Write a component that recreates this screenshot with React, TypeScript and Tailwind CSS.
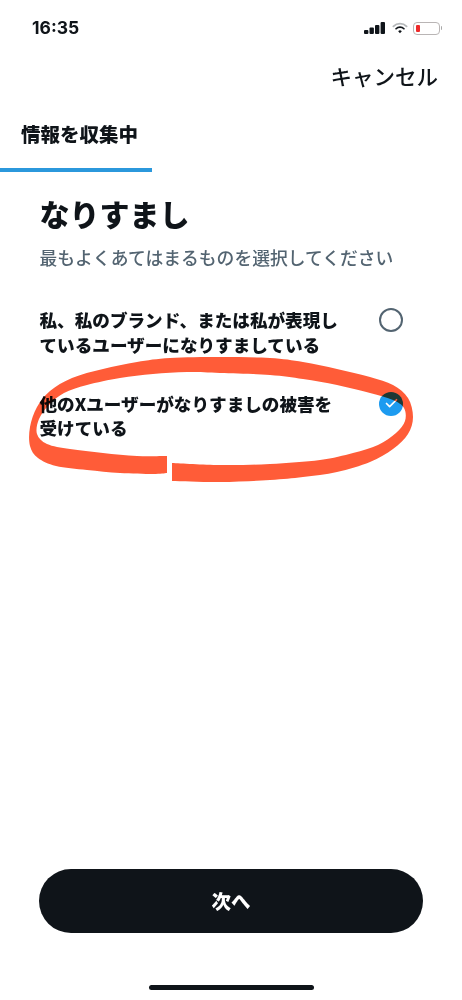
import { Check } from "lucide-react";

const CJK = "font-['Noto_Sans_CJK_JP','Noto_Sans',sans-serif]";

type Point = [number, number];

// open catmull-rom curve running through every given point
function smooth(points: Point[]) {
  let d = "";
  for (let i = 0; i < points.length - 1; i++) {
    const p0 = points[Math.max(i - 1, 0)];
    const p1 = points[i];
    const p2 = points[i + 1];
    const p3 = points[Math.min(i + 2, points.length - 1)];
    const c1 = [p1[0] + (p2[0] - p0[0]) / 6, p1[1] + (p2[1] - p0[1]) / 6];
    const c2 = [p2[0] - (p3[0] - p1[0]) / 6, p2[1] - (p3[1] - p1[1]) / 6];
    d += ` C${c1[0]} ${c1[1]} ${c2[0]} ${c2[1]} ${p2[0]} ${p2[1]}`;
  }
  return d;
}

// page coordinates, traced from the gap at the bottom round the right side
const outer: Point[] = [
  [172, 481], [220, 482], [270, 480], [303, 477], [337, 472], [370, 462], [393, 449], [408, 434], [413, 417],
  [408, 398], [393, 385], [370, 377], [337, 369], [303, 362], [270, 358], [220, 357], [170, 358], [137, 362],
  [103, 369], [72, 378], [50, 391], [37, 407], [30, 427], [30, 446], [38, 458], [56, 466], [87, 470], [120, 473],
  [153, 474], [167, 473],
];
const inner: Point[] = [
  [167, 456], [137, 456], [103, 453], [70, 449], [47, 444], [37, 434], [39, 419], [49, 405], [64, 393], [87, 385],
  [120, 378], [153, 374], [187, 372], [220, 373], [270, 375], [303, 379], [337, 385], [370, 393], [393, 400],
  [404, 408], [405, 421], [396, 433], [378, 445], [353, 453], [320, 460], [270, 464], [220, 465], [172, 463],
];
const scribble = `M172 481${smooth(outer)} L167 456${smooth(inner)} Z`;

function StatusIcons() {
  return (
    <div className="flex items-center">
      <svg width="21" height="12" viewBox="0 0 21 12" fill="#0f1419">
        <rect x="0" y="8" width="4.4" height="4" rx="1" />
        <rect x="5.5" y="5.5" width="4.4" height="6.5" rx="1" />
        <rect x="11" y="3" width="4.4" height="9" rx="1" />
        <rect x="16.6" y="0" width="4.4" height="12" rx="1" />
      </svg>
      <svg className="mr-[5px] ml-[7px]" width="16" height="12" viewBox="0 0 17 12" fill="none" strokeLinecap="round">
        <path d="M1.5 4.2a10 10 0 0 1 14 0" stroke="#b5b8ba" strokeWidth="2" />
        <path d="M4.3 6.8a6 6 0 0 1 8.4 0" stroke="#0f1419" strokeWidth="1.8" />
        <path d="M8.5 11.5 6.6 9.4a2.8 2.8 0 0 1 3.8 0Z" fill="#0f1419" />
      </svg>
      <div className="flex items-center gap-[1px]">
        <div className="flex h-[13px] w-[27px] items-center rounded-[4px] border border-[#b9b5b5] p-[2px]">
          <div className="h-full w-[4px] rounded-[1px] bg-[#ee2b2b]" />
        </div>
        <div className="h-[4px] w-[1px] rounded-r-full bg-[#a9a9a9]" />
      </div>
    </div>
  );
}

function Radio({ checked }: { checked?: boolean }) {
  if (checked) {
    return (
      <div className="flex h-[24px] w-[24px] shrink-0 items-center justify-center rounded-full bg-[#1d9bf0]">
        <Check size={15} color="#ffffff" strokeWidth={2.75} />
      </div>
    );
  }
  return <div className="h-[24px] w-[24px] shrink-0 rounded-full border-[2.5px] border-[#536471]" />;
}

function Option({ label, checked }: { label: string; checked?: boolean }) {
  return (
    <div className="flex items-start justify-between">
      <p className="w-[304px] text-[17.6px] leading-[24.5px] font-black text-[#0f1419]">{label}</p>
      <div className="mr-[-1px]">
        <Radio checked={checked} />
      </div>
    </div>
  );
}

export default function App() {
  return (
    <div className={`relative flex h-[1000px] w-[462px] flex-col overflow-hidden bg-white ${CJK}`}>
      {/* Status bar */}
      <div className="flex h-[56px] shrink-0 items-center justify-between pr-[20px] pl-[32px]">
        <span className="font-['Inter',sans-serif] text-[17.5px] font-bold text-[#0f1419]">16:35</span>
        <StatusIcons />
      </div>

      {/* Cancel */}
      <div className="flex h-[40px] shrink-0 items-center justify-end pr-[24px]">
        <span className="text-[21.5px] font-medium text-[#0f1419]">キャンセル</span>
      </div>

      {/* Step tab */}
      <div className="flex h-[76px] shrink-0 flex-col justify-end">
        <p className="pb-[20px] pl-[21px] text-[19.5px] leading-[28px] font-black text-[#0f1419]">情報を収集中</p>
        <div className="h-[4px] w-[152px] bg-[#2b98dc]" />
      </div>

      {/* Question */}
      <div className="flex flex-1 flex-col pr-[40px] pl-[39.5px]">
        <h1 className="mt-[19px] text-[30px] leading-[44px] font-black text-[#0f1419]">なりすまし</h1>
        <p className="mt-[10px] text-[17.8px] leading-[24px] font-medium text-[#536471]">最もよくあてはまるものを選択してください</p>
        <div className="mt-[39px] flex flex-col gap-[34.5px] pr-[20px]">
          <Option label="私、私のブランド、または私が表現しているユーザーになりすましている" />
          <Option label="他のXユーザーがなりすましの被害を受けている" checked />
        </div>
      </div>

      {/* Next button */}
      <div className="flex shrink-0 justify-center pb-[67px]">
        <button
          className="flex h-[64px] w-[384px] items-center justify-center rounded-full bg-[#0f1419] text-[19.5px] font-black text-white"
          type="button"
        >
          次へ
        </button>
      </div>

      {/* Home indicator */}
      <div className="absolute bottom-[10px] left-[149px] h-[5px] w-[165px] rounded-full bg-[#0f1419]" />

      {/* Hand drawn highlight */}
      <svg
        className="absolute top-[340px] left-0 mix-blend-multiply blur-[0.6px]"
        width="462"
        height="160"
        viewBox="0 340 462 160"
      >
        <path d={scribble} fill="#ff5c38" />
      </svg>
    </div>
  );
}
